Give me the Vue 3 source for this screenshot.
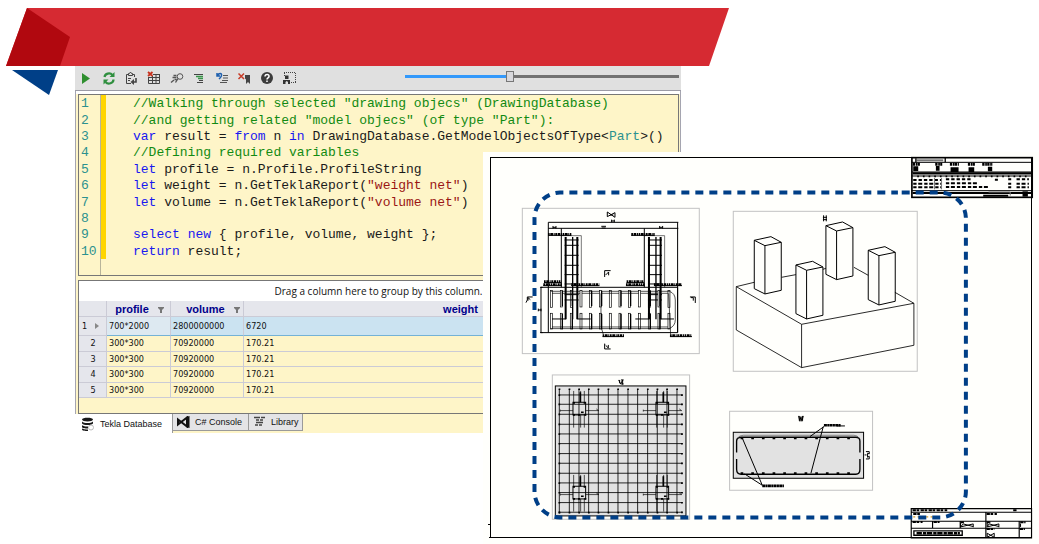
<script setup>
import { ref } from 'vue'

const zoomLevel = ref(38)

const tools = [
  'Run', 'Refresh', 'Paste', 'Delete table', 'Find',
  'Indent', 'Undo format', 'Clear bookmarks', 'Help', 'Select area',
]

const code = [
  [['c', '//Walking through selected "drawing objecs" (DrawingDatabase)']],
  [['c', '//and getting related "model objecs" (of type "Part"):']],
  [['k', 'var'], ['', ' result = '], ['k', 'from'], ['', ' n '], ['k', 'in'], ['', ' DrawingDatabase.GetModelObjectsOfType<'], ['t', 'Part'], ['', '>()']],
  [['c', '//Defining required variables']],
  [['k', 'let'], ['', ' profile = n.Profile.ProfileString']],
  [['k', 'let'], ['', ' weight = n.GetTeklaReport('], ['s', '"weight net"'], ['', ')']],
  [['k', 'let'], ['', ' volume = n.GetTeklaReport('], ['s', '"volume net"'], ['', ')']],
  [],
  [['k', 'select'], ['', ' '], ['k', 'new'], ['', ' { profile, volume, weight };']],
  [['k', 'return'], ['', ' result;']],
]

const rows = [
  ['700*2000', '2800000000', '6720'],
  ['300*300', '70920000', '170.21'],
  ['300*300', '70920000', '170.21'],
  ['300*300', '70920000', '170.21'],
  ['300*300', '70920000', '170.21'],
]

// Drawing geometry, in thirds of a sheet unit
const rungs = [120, 136, 166, 196, 224, 252, 284, 300]
const stirrups = Array.from({ length: 13 }, (_, i) => 95 + Math.round(i * 29.3))
const meshX = [43, 73, 102, 131, 160, 190, 219, 249, 278, 308, 337, 366, 396]
const meshY = [75, 103, 133, 163, 192, 221, 251, 280, 310, 339, 368, 398, 427]
const pads = [[84, 97], [333, 97], [84, 349], [333, 349]]
const columns = [
  [88, 121, 266], [303, 77, 223], [430, 151, 299], [213, 195, 341],
]
const ties = Array.from({ length: 11 }, (_, i) => 66 + i * 32)
const labels = [
  [84, 103, 70], [334, 103, 70], [72, 245, 52], [70, 254, 56], [154, 254, 84],
  [320, 245, 52], [318, 254, 56], [402, 254, 84], [248, 407, 64], [450, 407, 66],
]
</script>

<template>
  <main class="slide">
    <svg class="banner" viewBox="0 0 730 96" width="730" height="96" aria-hidden="true">
      <path d="M27 8H729L709 66H6z" fill="#d62a32" />
      <path d="M27 8L70 37L60 66H6z" fill="#b1080f" />
      <path d="M12 70H58L49 95z" fill="#003f87" />
    </svg>

    <section class="panel">
      <header class="toolbar">
        <div class="tools">
          <button v-for="(name, i) in tools" :key="name" type="button" :aria-label="name">
            <svg viewBox="0 0 16 16" width="16" height="16">
              <path v-if="i === 0" d="M4 3L12 8.500L4 14z" fill="#2f8f2f" />
              <g v-else-if="i === 1" fill="none" stroke="#2f8f3f" stroke-width="2.200">
                <path d="M3.500 7A4.500 4 0 0 1 11.500 5M12.500 9.500A4.500 4 0 0 1 4.500 12" />
                <path d="M13.500 2V7H8.500zM2.500 14.500V9.500H7.500z" fill="#2f8f3f" stroke="none" />
              </g>
              <g v-else-if="i === 2" fill="none" stroke="#444">
                <path d="M11.500 7V4.500H9M5 4.500H3.500V13.500H8M5.500 5.500V3.500H6.500L7.500 2L8.500 3.500H9.500V5.500zM5 8.500H8M5 10.500H7" />
                <path d="M13 8V12H9" stroke-width="1.600" />
                <path d="M7.500 12L11 9V15z" fill="#444" stroke="none" />
              </g>
              <g v-else-if="i === 3" fill="none" stroke="#444">
                <path d="M7 4.500H14M2.500 8V13.500H13.500V4M2 7.500H14M2 10.500H14M6.500 6V14M10 4V14" />
                <path d="M2 2L6.500 6M6.500 2L2 6" stroke="#c8321e" stroke-width="1.800" />
              </g>
              <g v-else-if="i === 4" fill="none" stroke="#555">
                <circle cx="11" cy="6.500" r="2.800" />
                <path d="M9 8.500L6.500 12.500M2 12.500L5 10M4.500 5.500H7.500M3.500 7.500H7.500M5.500 9.500H7.500" stroke-width="1.400" />
              </g>
              <g v-else-if="i === 5" fill="none">
                <path d="M3 4.500H12M8 10.500H12M6 12.500H12" stroke="#444" />
                <path d="M5 6.500H12M7 8.500H12" stroke="#369447" stroke-width="1.500" />
              </g>
              <g v-else-if="i === 6" fill="none">
                <path d="M9 5.500H14M9 8H14M8 10.500H14M6 12.500H13" stroke="#555" />
                <path d="M3 3V6H6M3.500 5.500C5 2.500 8 3 7.500 5.500C7.400 7 6.500 7.500 5 9" stroke="#1d5fae" stroke-width="1.500" />
              </g>
              <g v-else-if="i === 7" fill="none">
                <path d="M1.500 3.500L7 9M7 3.500L1.500 9" stroke="#c83c28" stroke-width="1.500" />
                <path d="M8 5H13V14L11 12L9 14V9.500L8 8.500z" fill="#444" />
              </g>
              <g v-else-if="i === 8">
                <circle cx="8" cy="8" r="6" fill="#3c3c3c" />
                <path d="M6 6.500C6 3.500 10.500 4 10 6.500C9.700 8 8 7.700 8 9.500M8 10.500V12" fill="none" stroke="#fff" stroke-width="1.500" />
              </g>
              <g v-else fill="none" stroke="#444">
                <path d="M2 2.500H14M13.500 3V13M9 12.500H14M2.500 3V7" stroke-dasharray="1 1" />
                <path d="M3 5.500H6.500V9H3zM1 14V10H8V14H6V12L4.800 11L3.500 12V14z" fill="#333" stroke="none" />
              </g>
            </svg>
          </button>
        </div>
        <input v-model="zoomLevel" class="zoom" type="range" min="0" max="100" aria-label="Zoom">
      </header>

      <div class="body">
        <ol class="editor">
          <li v-for="(line, n) in code" :key="n">
            <span class="num">{{ n + 1 }}</span>
            <code><span v-for="(part, p) in line" :key="p" :class="part[0]">{{ part[1] }}</span></code>
          </li>
        </ol>

        <div class="grid">
          <p>Drag a column here to group by this column.</p>
          <table>
            <thead>
              <tr>
                <th class="idx"></th>
                <th class="col-profile">profile <svg viewBox="0 0 6 6" width="6" height="6"><path d="M0 0H6V1L4 3V6H2V3L0 1z" fill="#777" /></svg></th>
                <th class="col-volume">volume <svg viewBox="0 0 6 6" width="6" height="6"><path d="M0 0H6V1L4 3V6H2V3L0 1z" fill="#777" /></svg></th>
                <th>weight</th>
              </tr>
            </thead>
            <tbody>
              <tr v-for="(row, r) in rows" :key="r" :class="{ current: r === 0 }">
                <th class="idx" scope="row">{{ r + 1 }}<svg v-if="r === 0" viewBox="0 0 4 6" width="4" height="6"><path d="M0 0L4 3L0 6z" fill="#888" /></svg></th>
                <td v-for="(cell, c) in row" :key="c">{{ cell }}</td>
              </tr>
            </tbody>
          </table>
        </div>
      </div>

      <nav class="tabs">
        <button type="button" class="active">
          <svg viewBox="0 0 14 14" width="14" height="14">
            <path d="M1 2.500C1 0 12 0 12 2.500C12 5 1 5 1 2.500zM1 4.500C3 6.500 10 6.500 12 4.500V6.500C10 8.500 3 8.500 1 6.500zM1 8.300C3 9.500 5 9.700 7 9.500V11.500C4 11.500 1 11 1 10zM1 11.500C3 12.500 5 12.700 7 12.500V14C4 14 1 13.500 1 12.500z" fill="#181818" />
            <circle cx="10" cy="10.500" r="2.500" fill="none" stroke="#bbb" />
          </svg>
          Tekla Database
        </button>
        <button type="button" class="console">
          <svg viewBox="0 0 13 12" width="13" height="12">
            <path d="M1 3.500L10 10.500V1.500L1 8.500z" fill="none" stroke="#111" stroke-width="2" />
            <path d="M9 1L12.500 0V12L9 11z" fill="#111" />
          </svg>
          C# Console
        </button>
        <button type="button" class="library">
          <svg viewBox="0 0 13 12" width="13" height="12">
            <path d="M1 1.500H7M8 1.500H12M3 4H6M7 4H10M3 6.500H10M2 9H5M6 9H9" fill="none" stroke="#444" stroke-width="1.500" />
          </svg>
          Library
        </button>
      </nav>
    </section>

    <figure class="sheet">
      <svg viewBox="483 152 556 392" role="img" aria-label="Foundation drawing sheet" fill="none" stroke="#000">
        <path d="M490.500 538V157.500H1031.500V537.500H489M488 525H491M490 525V538" shape-rendering="crispEdges" />

        <!-- front elevation -->
        <g transform="translate(520 200) scale(.33333)" stroke-width="3">
          <rect x="7" y="25" width="531" height="436" stroke="#c2c2c2" />
          <path d="M85 67H475M85 85H475M85 67V398M124 85V262M373 85V262M473 67V398" />
          <path d="M262 36V50L285 38V52zM270 45H280M275 59V67M283 59V67M275 63H283M99 78V86M108 78V86M99 82H108M244 79H258M245 84H257M419 78V86M428 78V86M419 82H428" />
          <g v-for="dx in [0, 250]" :key="dx" :transform="`translate(${dx} 0)`">
            <path d="M124 107H184V262" stroke="#333" stroke-width="2" />
            <path d="M137 111V358M172 111V358" stroke-width="6" />
            <path d="M158 111V358" stroke-width="4" />
            <path v-for="y in rungs" :key="y" :d="`M134 ${y}H176`" />
            <path d="M96 357H138M172 357H212" />
          </g>
          <path d="M63 262H473V398H63zM60 262H68M60 398H68M55 326V334M63 326V334M55 330H63" />
          <path d="M92 274H448Q466 280 466 300V360Q466 378 448 386H92M96 280H444M96 381H444" stroke-width="2" />
          <g v-for="(x, i) in stirrups" :key="x">
            <rect :x="x - 3" y="272" width="6" :height="i % 2 ? 49 : 50" :fill="i % 2 ? '#fffffc' : 'none'" stroke-width="2" />
            <rect :x="x - 3" y="340" width="6" height="47" stroke-width="2" />
            <path v-if="i % 3 !== 0" :d="`M${x + 3} 272V318M${x + 3} 342V388`" stroke-width="4" />
          </g>
          <path d="M243 280V380L250 403M446 280L452 403" stroke-width="2" />
          <g v-for="(l, i) in labels" :key="i">
            <path :d="`M${l[0]} ${l[1]}h${l[2]}`" stroke-width="8" stroke-dasharray="5 2 8 2 3 2" />
            <path :d="`M${l[0]} ${l[1] + 3}h${l[2]}`" />
          </g>
          <path d="M254 231V212H272M257 225L266 216V226M254 431V447H272M257 436L265 444V435M38 291H22V300L18 308M24 302V293L31 299M510 291H526V309M513 293H520V302" />
        </g>

        <!-- isometric view -->
        <g transform="translate(725 200) scale(.33333)" stroke-width="3">
          <rect x="25" y="34" width="552" height="480" stroke="#c2c2c2" />
          <path d="M34 260L230 373L567 310V436L230 503L34 390zM230 373V503M34 260L88 247M170 232L213 224M294 208L303 205M387 202L430 226M510 277L567 310" stroke-width="2.500" />
          <path d="M296 46V64M304 46V64M294 52H306M294 59H306" />
          <path
            v-for="c in columns" :key="c[0]" stroke-width="3"
            :d="`M${c[0]} ${c[1]}l50 -11l31 17V${c[2] + 5}l-49 11L${c[0]} ${c[2]}zl32 16l49 -10m-49 10V${c[2] + 16}`"
          />
        </g>

        <!-- reinforcement plan -->
        <g transform="translate(545 370) scale(.33333)" stroke-width="3">
          <rect x="22" y="15" width="412" height="433" stroke="#c2c2c2" />
          <rect x="31" y="48" width="392" height="390" fill="#e2e2e2" />
          <path d="M221 30L227 42L233 30V44M224 30V40M228 30H236M227 42H236" />
          <path v-for="x in meshX" :key="x" :d="`M${x} 57V428`" stroke-width="2.500" />
          <path v-for="y in meshY" :key="y" :d="`M43 ${y}H413`" stroke-width="2.500" />
          <path v-for="x in meshX" :key="`a${x}`" :d="`M${x - 2} 58h5M${x - 2} 428h5`" stroke-width="5" />
          <path v-for="y in meshY" :key="`b${y}`" :d="`M43 ${y - 2}v5M411 ${y - 2}v5`" stroke-width="5" />
          <g v-for="(p, i) in pads" :key="i" :transform="`translate(${p[0]} ${p[1]})`">
            <rect width="38" height="38" stroke-width="3" />
            <path d="M2 -34V0M2 38V76M23 -34V0M23 38V76M34 -34V0M34 38V76M-38 25H0M38 25H76M70 20L78 26M-38 22V28" stroke-width="2" />
            <path d="M22 -30V0M0 38h6M15 38h6M34 38h6M0 2h6M32 2h6M24 30h8" stroke-width="5" />
          </g>
        </g>

        <!-- footing section -->
        <g transform="translate(720 400) scale(.33333)" stroke-width="3">
          <rect x="29" y="34" width="429" height="237" stroke="#c2c2c2" />
          <rect x="40" y="97" width="391" height="138" fill="#e2e2e2" />
          <path d="M50 158V124Q50 112 64 112H408Q420 112 420 124V158M50 177V208Q50 223 64 223H408Q420 223 420 208V177" stroke-width="4" />
          <path d="M54 116Q56 106 70 106H402Q414 106 418 116" stroke="#555" stroke-width="2" />
          <path v-for="x in ties" :key="x" :d="`M${x - 4} 115h8M${x - 4} 220h8`" stroke-width="6" />
          <path d="M312 80L270 110M310 80L273 220M66 112L127 256M74 222L127 256" />
          <path d="M312 76h50M127 258h65" stroke-width="8" stroke-dasharray="9 1 6 1" />
          <path d="M350 78h25" />
          <path d="M236 48L240 64L243 50L246 64L250 48M238 48V62M248 48V62" />
          <path d="M434 165H440M438 155H448V162L443 160V172L448 169V177H438" />
        </g>

        <!-- revision block -->
        <g transform="translate(900 150) scale(.33333)" stroke-width="3">
          <rect x="36" y="23" width="361" height="119" stroke-width="5" />
          <path d="M36 37H397M36 66H397M36 78H397M36 122H397" />
          <path d="M38 129H397M250 137H325" stroke-width="6" />
          <path d="M50 31H130" stroke="#777" stroke-width="6" />
          <path d="M136 24V37M48 25V37" stroke-width="4" />
          <path d="M39 43H60M106 43H127M150 43H177M204 43H225M247 43H278" stroke-width="9" stroke-dasharray="7 2 5 1" />
          <path d="M40 56H55M108 55H119M152 59H176M206 59H223M264 57H277" stroke-width="14" />
          <path d="M38 70H397" stroke-width="7" />
          <path d="M52 79H390" stroke-width="5" stroke-dasharray="5 12" />
          <path d="M40 90H125M138 88H213M285 89H294M325 88H334M350 88H387" stroke-width="6" stroke-dasharray="10 6" />
          <path d="M40 101H125M138 100H235M325 101H334M350 101H387M40 112H125M138 111H270M325 112H334M350 112H387" stroke-width="6" stroke-dasharray="10 5 12 6" />
          <path d="M104 84V118M125 84V118M266 126H331V137" stroke="#777" />
          <path d="M368 132H384" stroke-width="16" />
        </g>

        <!-- title block -->
        <g transform="translate(900 495) scale(.33333)" stroke-width="3">
          <path d="M34 41H395V129H34zM34 52H395M34 79H395M34 100H395M258 52V129M98 79V100M181 79V100M358 79V129" stroke-width="3.500" />
          <path d="M38 46H142M340 46H352M40 57H64M260 57H291M38 81H68M101 81H119M182 82H194M260 82H273M361 82H377M260 102H285M360 102H375" stroke-width="6" stroke-dasharray="10 2 8 4" />
          <path d="M40 66H112" stroke="#d49a28" stroke-width="4" stroke-dasharray="6 7" />
          <path d="M42 108H187V121H42z" stroke-width="4" />
          <path d="M50 115H180" stroke-width="7" stroke-dasharray="16 3 10 2" />
          <path d="M182 84V96L220 87V97M182 96L190 87L220 95M262 84V96L297 87V97M262 95L268 87L297 95M262 115V127L283 115V127zM362 86V96" />
        </g>

        <path
          d="M534.500 225V218A26 26 0 0 1 560 192.500H898"
          stroke="#003f87" stroke-width="4" stroke-dasharray="8 6"
        />
        <path
          d="M534.500 232V492A26 26 0 0 0 560 517.500H940A26 26 0 0 0 966 492V218A26 26 0 0 0 940 192.500H898"
          stroke="#003f87" stroke-width="4" stroke-dasharray="8 6"
        />
      </svg>
    </figure>
  </main>
</template>

<style>
body { margin: 0; background: #fff; }
</style>

<style scoped>
.slide {
  position: relative;
  display: grid;
  grid-template-columns: 75px 606fr 358fr;
  padding-top: 66px;
  min-height: 100vh;
  box-sizing: border-box;
  align-items: start;
  overflow: hidden;
  font-family: "Liberation Sans", Arial, sans-serif;
  font-size: 9px;
}
.banner { position: absolute; top: 0; left: 0; }
button { border: 0; padding: 0; background: none; font: inherit; color: #111; }
svg { flex: none; }
.panel { grid-column: 2; min-width: 0; background: #fef5c8; }
.toolbar {
  display: flex;
  justify-content: space-between;
  align-items: center;
  height: 24px;
  padding: 0 2px 0 3px;
  background: #e0e0e0;
  border-bottom: 1px solid #9b9ba6;
}
.tools { display: flex; justify-content: space-between; width: 220px; }
.tools button { width: 16px; height: 16px; }
.tools svg { display: block; }
.zoom {
  appearance: none;
  width: 274px;
  height: 12px;
  margin: 0 0 4px;
  background: linear-gradient(90deg, #3399fb 38%, #727272 38%) center / 100% 3px no-repeat;
}
.zoom::-webkit-slider-thumb {
  appearance: none;
  box-sizing: border-box;
  width: 8px;
  height: 11px;
  background: #d8d8dc;
  border: 1px solid #777;
}
.body { border: solid #a5a5b0; border-width: 0 1px; padding: 3px 1px 0 2px; background: linear-gradient(#fff 3px, #fef5c8 3px); }
.editor {
  display: grid;
  grid-auto-rows: 1fr;
  height: 164px;
  margin: 0 0 4px;
  padding: 0 0 16px;
  list-style: none;
  border: 1px solid #777;
  background: linear-gradient(90deg, transparent 21px, #b8b49a 21px, #b8b49a 22px, transparent 22px);
  font: 13px/14px "Liberation Mono", "Courier New", monospace;
  white-space: pre;
}
.editor li { display: flex; align-items: center; padding-top: 2px; background: linear-gradient(90deg, transparent 22px, #ffd500 22px, #ffd500 27px, transparent 27px); }
.num { width: 54px; padding-left: 2px; box-sizing: border-box; color: #2b918f; }
code { font: inherit; color: #1a1a1a; }
.c { color: #128a12; }
.k { color: #1818f0; }
.s { color: #9a1515; }
.t { color: #2b918f; }
.grid { height: 132px; border: 1px solid #777; border-width: 1px; }
.grid p { margin: 0; height: 20px; text-align: center; background: #fff; font: 10px/20px "Open Sans", sans-serif; color: #111; }
table { width: 100%; border-collapse: separate; border-spacing: 0; table-layout: fixed; color: #111; font-family: "DejaVu Sans Condensed", "DejaVu Sans", sans-serif; }
th, td { box-sizing: border-box; height: 16px; padding: 0 2px; line-height: 13px; text-align: left; border: solid #cbcbd6; border-width: 0 1px 1px 0; }
tbody tr:nth-child(odd) > * { height: 15px; }
thead th { background: #e5e6ec; color: #00008b; font: bold 11px/14px "Liberation Sans", Arial, sans-serif; text-align: center; }
.col-profile { width: 64px; padding-right: 0; }
.col-volume { width: 73px; padding-left: 14px; }
.col-profile svg, .col-volume svg { margin-left: 6px; }
.idx { width: 28px; padding-left: 3px; background: #e5e6ec; font-weight: normal; text-align: center; }
tbody tr.current > * { height: 19px; background: #cbe3f1; border-bottom-color: #74b2d6; }
tbody tr.current > td:nth-child(2) { background: #dde9f1; }
tbody tr.current > .idx { background: #e5e6ec; border-bottom-color: #cbcbd6; text-align: left; }
.current .idx svg { margin-left: 8px; }
.tabs { display: flex; align-items: flex-start; height: 19px; }
.tabs button { display: flex; align-items: center; gap: 5px; height: 17px; padding: 0 4px; background: #e4e4e6; border: solid #9a9a9a; border-width: 0 1px 1px 0; white-space: nowrap; }
.tabs .active { width: 98px; height: 19px; padding: 0 6px; background: #fff; border-bottom: 0; }
.tabs .console { width: 76px; }
.tabs .library { width: 54px; }
.sheet { position: absolute; top: 152px; left: 46.5%; right: 0; margin: 0; background: #fffffc; }
.sheet svg { display: block; width: 100%; }
</style>
